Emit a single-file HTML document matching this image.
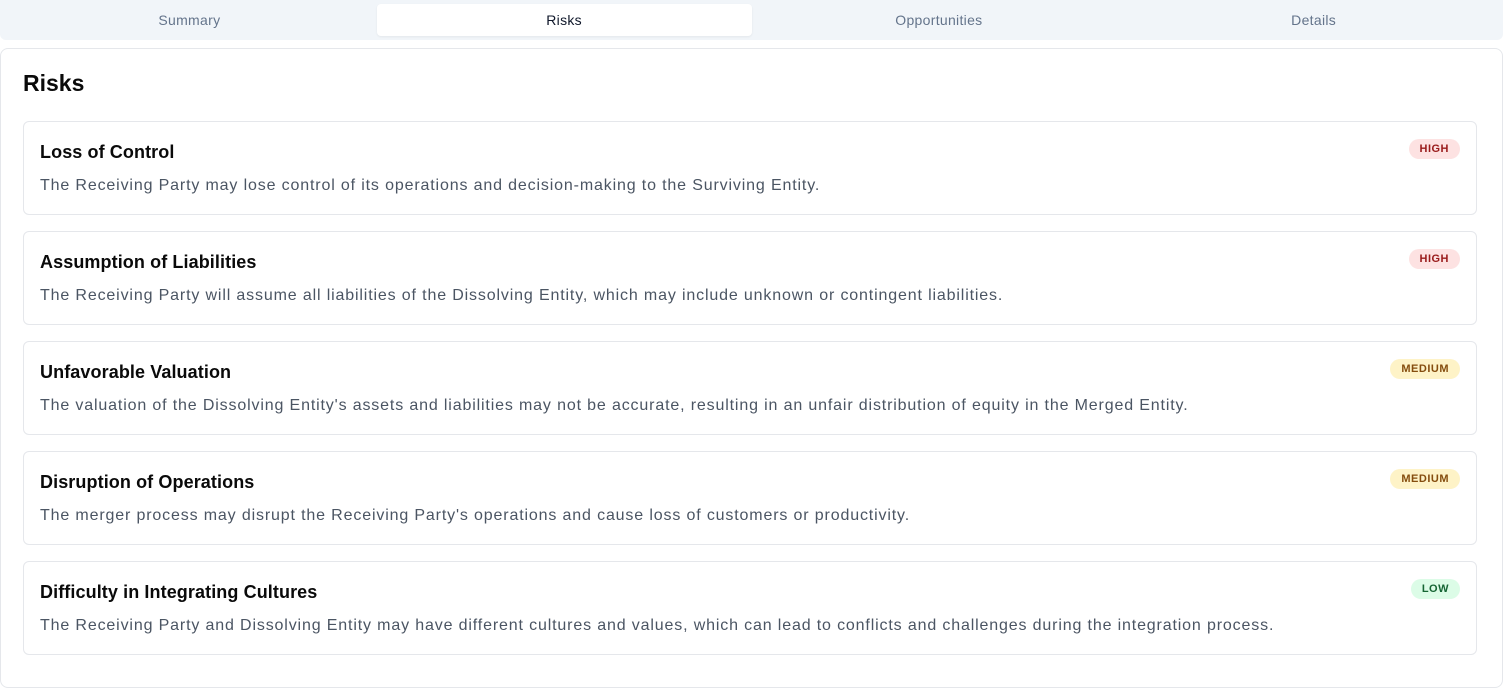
<!DOCTYPE html>
<html><head><meta charset="utf-8"><style>
*{box-sizing:border-box;margin:0;padding:0}
body{width:1505px;height:681px;background:#fff;font-family:"Liberation Sans",sans-serif;overflow:hidden;position:relative}
.tabs{position:absolute;left:0;top:0;width:1503px;height:40px;background:#f1f5f9;border-radius:0 0 6px 6px;display:flex;padding:4px 2px}
.tab{flex:1;text-align:center;font-size:14px;color:#64748b;line-height:32px;border-radius:4px;letter-spacing:.3px}
.tab.a{background:#fff;color:#0f172a;box-shadow:0 1px 2px rgba(0,0,0,.06)}
.main{position:absolute;left:0;top:48px;width:1503px;height:640px;border:1px solid #e5e7eb;border-radius:8px;background:#fff}
h1{position:absolute;left:23px;top:70px;font-size:23px;font-weight:700;color:#0a0a0a}
.card{position:absolute;left:23px;width:1454px;height:94px;border:1px solid #e5e7eb;border-radius:6px}
.card h2{position:absolute;left:16px;top:20px;font-size:18px;font-weight:700;color:#0a0a0a;letter-spacing:.1px}
.card p{position:absolute;left:16px;top:55px;font-size:16px;color:#4b5563;white-space:nowrap;letter-spacing:.85px}
.b{position:absolute;right:16px;top:17px;height:20px;line-height:20px;padding:0 11px;border-radius:10px;font-size:11px;font-weight:700;letter-spacing:.5px}
.h{background:#fde2e2;color:#991b1b}.m{background:#fef3c7;color:#854d0e}.l{background:#dcfce7;color:#166534}
</style></head><body>
<div class="tabs"><div class="tab">Summary</div><div class="tab a">Risks</div><div class="tab">Opportunities</div><div class="tab">Details</div></div>
<div class="main"></div>
<h1>Risks</h1>
<div class="card" style="top:121px"><h2>Loss of Control</h2><span class="b h">HIGH</span><p>The Receiving Party may lose control of its operations and decision-making to the Surviving Entity.</p></div>
<div class="card" style="top:231px"><h2>Assumption of Liabilities</h2><span class="b h">HIGH</span><p>The Receiving Party will assume all liabilities of the Dissolving Entity, which may include unknown or contingent liabilities.</p></div>
<div class="card" style="top:341px"><h2>Unfavorable Valuation</h2><span class="b m">MEDIUM</span><p>The valuation of the Dissolving Entity's assets and liabilities may not be accurate, resulting in an unfair distribution of equity in the Merged Entity.</p></div>
<div class="card" style="top:451px"><h2>Disruption of Operations</h2><span class="b m">MEDIUM</span><p>The merger process may disrupt the Receiving Party's operations and cause loss of customers or productivity.</p></div>
<div class="card" style="top:561px"><h2>Difficulty in Integrating Cultures</h2><span class="b l">LOW</span><p>The Receiving Party and Dissolving Entity may have different cultures and values, which can lead to conflicts and challenges during the integration process.</p></div>
</body></html>
